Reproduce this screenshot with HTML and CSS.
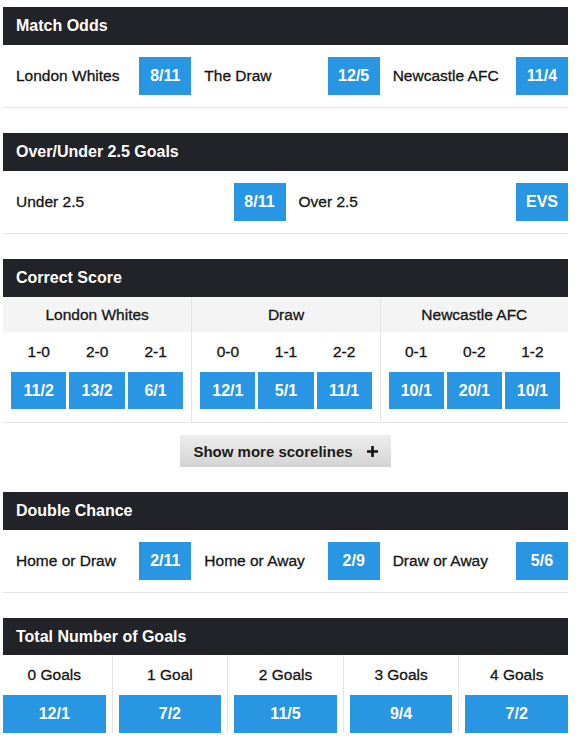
FILE: index.html
```html
<!DOCTYPE html>
<html>
<head>
<meta charset="utf-8">
<link rel="stylesheet" href="styles.css">
</head>
<body>
<div class="page">
  <section class="market">
    <div class="mhead">Match Odds</div>
    <div class="row row3">
      <div class="sel"><span class="lbl">London Whites</span><span class="odd">8/11</span></div>
      <div class="sel"><span class="lbl">The Draw</span><span class="odd">12/5</span></div>
      <div class="sel"><span class="lbl">Newcastle AFC</span><span class="odd">11/4</span></div>
    </div>
  </section>

  <section class="market">
    <div class="mhead">Over/Under 2.5 Goals</div>
    <div class="row row2">
      <div class="sel"><span class="lbl">Under 2.5</span><span class="odd">8/11</span></div>
      <div class="sel"><span class="lbl">Over 2.5</span><span class="odd">EVS</span></div>
    </div>
  </section>

  <section class="market cs">
    <div class="mhead">Correct Score</div>
    <div class="cs-grid">
      <div class="cs-col">
        <div class="cs-title">London Whites</div>
        <div class="cs-body">
          <span class="score">1-0</span><span class="score">2-0</span><span class="score">2-1</span>
          <span class="codd">11/2</span><span class="codd">13/2</span><span class="codd">6/1</span>
        </div>
      </div>
      <div class="cs-col">
        <div class="cs-title">Draw</div>
        <div class="cs-body">
          <span class="score">0-0</span><span class="score">1-1</span><span class="score">2-2</span>
          <span class="codd">12/1</span><span class="codd">5/1</span><span class="codd">11/1</span>
        </div>
      </div>
      <div class="cs-col">
        <div class="cs-title">Newcastle AFC</div>
        <div class="cs-body">
          <span class="score">0-1</span><span class="score">0-2</span><span class="score">1-2</span>
          <span class="codd">10/1</span><span class="codd">20/1</span><span class="codd">10/1</span>
        </div>
      </div>
    </div>
    <div class="more-wrap">
      <div class="more">
        <span>Show more scorelines</span>
        <svg class="plus" width="11" height="11" viewBox="0 0 11 11"><path d="M5.5 0v11M0 5.5h11" stroke="#111" stroke-width="2.6"/></svg>
      </div>
    </div>
  </section>

  <section class="market">
    <div class="mhead">Double Chance</div>
    <div class="row row3">
      <div class="sel"><span class="lbl">Home or Draw</span><span class="odd">2/11</span></div>
      <div class="sel"><span class="lbl">Home or Away</span><span class="odd">2/9</span></div>
      <div class="sel"><span class="lbl">Draw or Away</span><span class="odd">5/6</span></div>
    </div>
  </section>

  <section class="market goals">
    <div class="mhead">Total Number of Goals</div>
    <div class="tg-grid">
      <div class="tg-cell"><span class="tg-lbl">0 Goals</span><span class="tg-odd">12/1</span></div>
      <div class="tg-cell"><span class="tg-lbl">1 Goal</span><span class="tg-odd">7/2</span></div>
      <div class="tg-cell"><span class="tg-lbl">2 Goals</span><span class="tg-odd">11/5</span></div>
      <div class="tg-cell"><span class="tg-lbl">3 Goals</span><span class="tg-odd">9/4</span></div>
      <div class="tg-cell"><span class="tg-lbl">4 Goals</span><span class="tg-odd">7/2</span></div>
    </div>
  </section>
</div>
</body>
</html>
```

FILE: styles.css
```css
* { box-sizing: border-box; }
html, body { margin: 0; padding: 0; background: #fff; }
body {
  font-family: "Liberation Sans", Arial, sans-serif;
  color: #141414;
}
.page {
  width: 565px;
  margin: 7px 0 0 3px;
}
.market { margin-bottom: 25px; }
.mhead {
  height: 38px;
  background: #222328;
  color: #fff;
  font-weight: bold;
  font-size: 16px;
  display: flex;
  align-items: center;
  padding-left: 13px;
}
.row {
  display: grid;
  padding: 12px 0;
  border-bottom: 1px solid #e5e5e5;
}
.row3 { grid-template-columns: repeat(3, 1fr); }
.row2 { grid-template-columns: repeat(2, 1fr); }
.sel {
  display: flex;
  align-items: center;
  justify-content: space-between;
  padding-left: 13px;
}
.lbl, .cs-title, .score, .tg-lbl {
  font-size: 15.5px;
  -webkit-text-stroke: 0.3px #141414;
}
.odd {
  width: 52px;
  height: 38px;
  background: #2996e3;
  color: #fff;
  font-weight: bold;
  font-size: 16px;
  display: flex;
  align-items: center;
  justify-content: center;
}

/* correct score */
.cs-grid {
  display: grid;
  grid-template-columns: repeat(3, 1fr);
  border-bottom: 1px solid #e5e5e5;
}
.cs-col + .cs-col { border-left: 1px solid #e5e5e5; }
.cs-title {
  height: 35px;
  background: #f4f4f4;
  display: flex;
  align-items: center;
  justify-content: center;
}
.cs-body {
  display: grid;
  grid-template-columns: repeat(3, 1fr);
  column-gap: 3px;
  padding: 0 8px 13px;
}
.score {
  height: 40px;
  display: flex;
  align-items: center;
  justify-content: center;
}
.codd {
  height: 37px;
  background: #2996e3;
  color: #fff;
  font-weight: bold;
  font-size: 16px;
  display: flex;
  align-items: center;
  justify-content: center;
}
.more-wrap {
  display: flex;
  justify-content: center;
  padding-top: 12px;
}
.more {
  height: 32px;
  padding: 0 13px;
  display: flex;
  align-items: center;
  gap: 14px;
  background: linear-gradient(#eeeeee, #d3d3d3);
  font-weight: bold;
  font-size: 15px;
  color: #1a1a1a;
}
.plus { display: block; }

/* total goals */
.goals { margin-bottom: 0; }
.goals .mhead { height: 37px; }
.tg-grid {
  display: grid;
  grid-template-columns: repeat(5, 1fr);
  column-gap: 13px;
  padding-bottom: 20px;
}
.tg-cell {
  position: relative;
  display: flex;
  flex-direction: column;
}
.tg-cell + .tg-cell::before {
  content: "";
  position: absolute;
  left: -7px;
  top: 0;
  bottom: 0;
  width: 1px;
  background: #e5e5e5;
}
.tg-lbl {
  height: 40px;
  display: flex;
  align-items: center;
  justify-content: center;
}
.tg-odd {
  height: 38px;
  background: #2996e3;
  color: #fff;
  font-weight: bold;
  font-size: 16px;
  display: flex;
  align-items: center;
  justify-content: center;
}
```
